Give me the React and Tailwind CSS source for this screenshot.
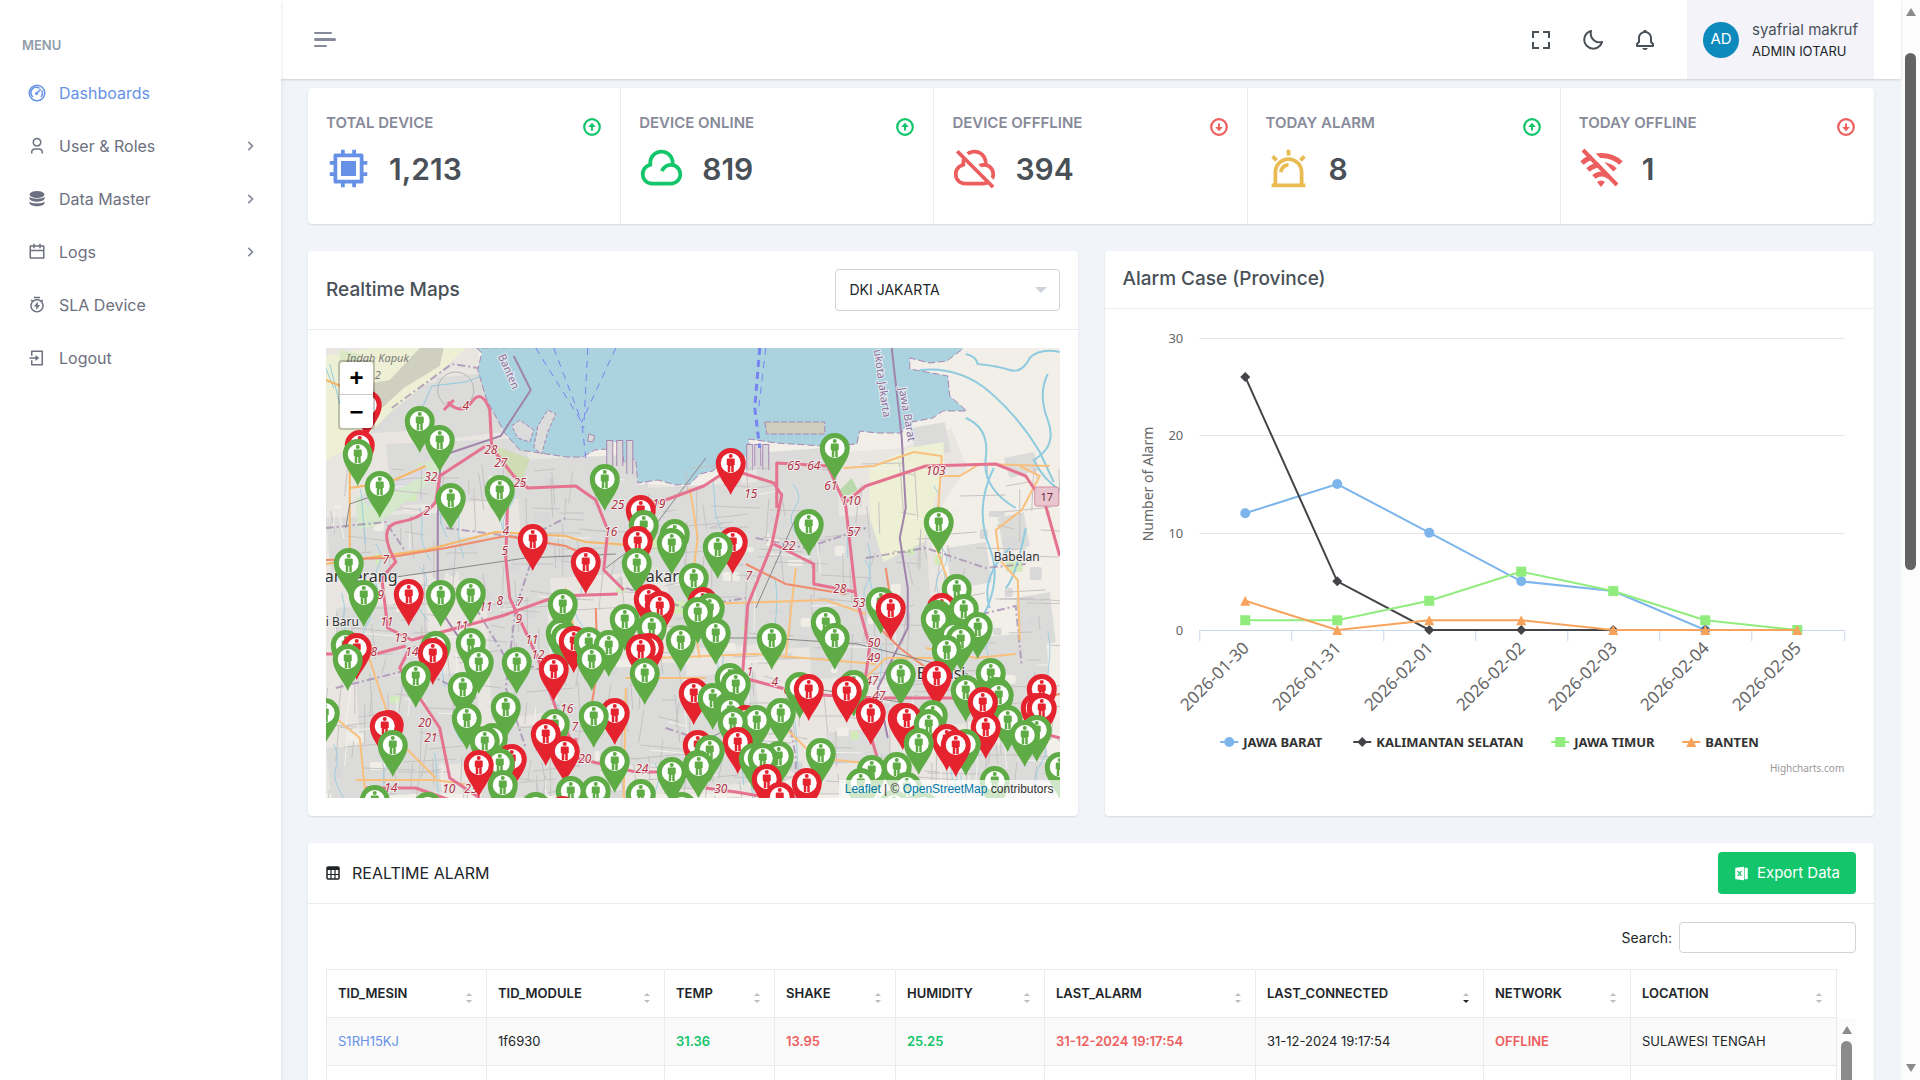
import React from 'react';
import {
  RiAlarmWarningLine,
  RiCalendarLine,
  RiCloudLine,
  RiCloudOffLine,
  RiCpuLine,
  RiFileExcel2Fill,
  RiLoginBoxLine,
  RiTimerFlashLine,
  RiUser3Line,
} from 'react-icons/ri';
import { BiBell, BiChevronRight, BiFullscreen, BiMoon } from 'react-icons/bi';

const GaugeIcon = ({ className }) => (
  <svg viewBox="0 0 18 18" className={className} fill="none" stroke="currentColor">
    <circle cx="9" cy="9" r="7.800" strokeWidth="1.500" />
    <path d="M5 13a5.300 5.300 0 0 1 6.500-8.600M13.600 6.700A5.300 5.300 0 0 1 13 13" strokeWidth="1.500" />
    <path d="M8.500 9.500l4-4" strokeWidth="1.500" strokeLinecap="round" />
    <circle cx="8.500" cy="9.500" r="1.500" fill="currentColor" stroke="none" />
  </svg>
);

const DatabaseIcon = ({ className }) => (
  <svg viewBox="0 0 18 18" className={className} fill="currentColor">
    <ellipse cx="9" cy="4.500" rx="7.500" ry="3.500" />
    <path d="M1.500 6.800c1.500 2.600 13.500 2.600 15 0v1.900c-1 4-14 4-15 0z" />
    <path d="M1.500 11.400c1.500 2.600 13.500 2.600 15 0v1.900c-1 4-14 4-15 0z" />
  </svg>
);

const GridIcon = ({ className }) => (
  <svg viewBox="0 0 14 14" className={className} fill="none" stroke="currentColor">
    <rect x="1" y="1" width="12" height="12" rx="1" strokeWidth="1.500" />
    <path d="M1 2.500h12" strokeWidth="3" />
    <path d="M1 8.500h12M5 3v10M9 3v10" strokeWidth="1.200" />
  </svg>
);

const WifiOffIcon = ({ className }) => (
  <svg viewBox="0 0 45 45" className={className} fill="none">
    <g stroke="currentColor" strokeWidth="5">
      <path d="M3 17a29 29 0 0 1 39 0" />
      <path d="M9 24a20 20 0 0 1 27 0" />
      <path d="M15 31a11 11 0 0 1 15 0" />
    </g>
    <path d="M18 36a6 6 0 0 1 8 0l-4 5z" fill="currentColor" />
    <path d="M8 2l33 34" stroke="#fff" strokeWidth="5" />
    <path d="M4 4l34 35" stroke="currentColor" strokeWidth="4" />
  </svg>
);

const TrendIcon = ({ up }) => (
  <svg viewBox="0 0 18 18" className={`mt-[6px] mr-px size-[18px] ${up ? 'text-[#13c56b]' : 'text-[#ed5e5e]'}`} fill="none">
    <circle cx="9" cy="9" r="7.800" stroke="currentColor" strokeWidth="2.200" />
    <path d={up ? 'M9 4.800l3.800 4.200H10v3.600H8V9H5.200z' : 'M9 13.200L12.800 9H10V5.400H8V9H5.200z'} fill="currentColor" />
  </svg>
);

const menu = [
  { label: 'Dashboards', icon: GaugeIcon, active: true },
  { label: 'User & Roles', icon: RiUser3Line, children: true },
  { label: 'Data Master', icon: DatabaseIcon, children: true },
  { label: 'Logs', icon: RiCalendarLine, children: true },
  { label: 'SLA Device', icon: RiTimerFlashLine },
  { label: 'Logout', icon: RiLoginBoxLine },
];

const stats = [
  { label: 'TOTAL DEVICE', value: '1,213', icon: RiCpuLine, color: 'text-[#6691e7]', up: true },
  { label: 'DEVICE ONLINE', value: '819', icon: RiCloudLine, color: 'text-[#13c56b]', up: true },
  { label: 'DEVICE OFFFLINE', value: '394', icon: RiCloudOffLine, color: 'text-[#ed5e5e]', up: false },
  { label: 'TODAY ALARM', value: '8', icon: RiAlarmWarningLine, color: 'text-[#e8bc52]', up: true },
  { label: 'TODAY OFFLINE', value: '1', icon: WifiOffIcon, color: 'text-[#ed5e5e]', up: false },
];

// [x, y] of each pin head on the 734x450 map
const offlinePins = [
  [41, 57], [34, 97], [207, 191], [315, 162], [312, 193], [260, 214], [405, 115], [407, 194],
  [83, 246], [323, 251], [334, 258], [31, 300], [107, 305], [248, 293], [228, 321], [323, 300],
  [315, 301], [59, 378], [63, 377], [220, 386], [239, 403], [289, 365], [368, 345], [186, 411],
  [153, 417], [372, 397], [237, 463], [377, 254], [565, 260], [616, 260], [611, 328], [657, 354],
  [716, 341], [710, 360], [716, 360], [660, 379], [420, 372], [412, 394], [441, 431], [454, 449],
  [481, 435], [483, 341], [521, 343], [545, 365], [577, 370], [581, 370], [621, 391], [630, 397],
];

const onlinePins = [
  [32, 106], [94, 73], [114, 92], [54, 138], [125, 150], [174, 142], [279, 131], [318, 177],
  [349, 186], [346, 195], [311, 215], [23, 215], [368, 230], [509, 100], [483, 176], [613, 174],
  [392, 199], [38, 247], [115, 247], [145, 245], [237, 256], [299, 271], [326, 279], [20, 297],
  [22, 311], [110, 298], [145, 295], [153, 314], [90, 328], [191, 314], [235, 285], [240, 290],
  [263, 294], [283, 297], [266, 311], [355, 292], [319, 325], [137, 339], [141, 370], [180, 359],
  [67, 397], [-1, 365], [229, 376], [268, 368], [167, 390], [159, 393], [174, 415], [177, 437],
  [289, 413], [245, 443], [270, 443], [315, 446], [346, 424], [372, 417], [49, 452], [102, 459],
  [210, 459], [356, 459], [384, 260], [372, 264], [390, 285], [446, 290], [500, 274], [509, 290],
  [555, 254], [631, 241], [612, 267], [610, 271], [638, 261], [652, 279], [628, 287], [635, 291],
  [621, 302], [575, 326], [665, 325], [640, 342], [671, 344], [673, 347], [682, 372], [711, 382],
  [699, 387], [734, 419], [404, 330], [410, 336], [387, 350], [403, 359], [405, 362], [407, 374],
  [431, 372], [455, 365], [384, 402], [373, 418], [428, 410], [437, 410], [453, 408], [495, 405],
  [474, 339], [528, 337], [607, 367], [603, 376], [593, 395], [640, 396], [546, 422], [571, 419],
  [535, 435], [581, 439], [669, 433], [568, 457], [598, 459], [670, 462],
];

// southern pins are stacked over northern ones
const pins = [
  ...offlinePins.map(([x, y]) => ({ x, y, color: '#e5232f' })),
  ...onlinePins.map(([x, y]) => ({ x, y, color: '#5fac46' })),
].sort((a, b) => a.y - b.y);

const roadNumbers = [
  ['4', 140, 62], ['28', 165, 106], ['27', 175, 119], ['32', 105, 133], ['25', 194, 139],
  ['2', 101, 167], ['4', 180, 187], ['5', 179, 207], ['7', 60, 216], ['25', 292, 161],
  ['19', 333, 160], ['16', 285, 188], ['65', 468, 122], ['64', 488, 122], ['15', 425, 150],
  ['61', 505, 142], ['110', 525, 157], ['57', 528, 188], ['103', 610, 127], ['22', 463, 202],
  ['7', 423, 232], ['9', 55, 251], ['11', 61, 278], ['13', 75, 294], ['14', 86, 308],
  ['8', 174, 257], ['7', 194, 258], ['9', 193, 275], ['11', 206, 296], ['12', 212, 311],
  ['11', 136, 282], ['11', 160, 263], ['28', 514, 245], ['53', 533, 259], ['50', 548, 299],
  ['49', 548, 314], ['47', 546, 337], ['47', 553, 352], ['4', 449, 338], ['6', 461, 346],
  ['20', 99, 379], ['21', 105, 394], ['16', 241, 365], ['7', 249, 383], ['20', 259, 415],
  ['24', 316, 425], ['14', 65, 444], ['10', 123, 445], ['23', 145, 445], ['30', 395, 445],
  ['8', 48, 308], ['1', 424, 328],
];

const blocks = [
  [0, 40, 120, 46], [110, 30, 60, 60], [60, 96, 140, 60], [190, 112, 130, 90], [0, 170, 130, 60],
  [130, 190, 90, 70], [160, 230, 60, 140], [10, 260, 90, 70], [30, 330, 120, 90], [200, 160, 110, 70],
  [320, 140, 120, 90], [430, 105, 80, 120], [340, 210, 120, 90], [440, 220, 100, 80], [500, 170, 70, 110],
  [585, 80, 34, 30], [540, 190, 60, 90], [230, 320, 130, 100], [150, 380, 120, 70], [330, 330, 100, 110],
  [480, 260, 80, 70], [560, 270, 90, 110], [640, 290, 80, 80], [0, 400, 110, 50], [620, 200, 40, 40],
  [672, 170, 26, 34], [690, 250, 34, 50], [500, 385, 60, 30], [640, 400, 80, 40], [678, 110, 30, 18],
];

// small seeded generator, keeps the side streets the same on every render
const seeded = (seed) => () => {
  seed = (seed * 16807) % 2147483647;
  return seed / 2147483647;
};
const random = seeded(77);
const streets = Array.from({ length: 420 }, () => {
  const x = Math.round(random() * 734);
  const y = Math.round(115 + random() * 335);
  const long = Math.round(12 + random() * 42);
  const skew = Math.round(random() * 10 - 5);
  return random() > 0.5 ? `M${x} ${y}l${long} ${skew}` : `M${x} ${y}l${skew} ${long}`;
});
const rivers = Array.from({ length: 46 }, () => {
  const x = Math.round(random() * 734);
  const y = Math.round(130 + random() * 300);
  return `M${x} ${y}q${Math.round(random() * 14)} 12 2 24t${Math.round(random() * 16 - 6)} 30`;
});
const hamlets = Array.from({ length: 130 }, () => ({
  x: Math.round(random() * 734),
  y: Math.round(115 + random() * 335),
  w: Math.round(4 + random() * 14),
  h: Math.round(4 + random() * 10),
}));

const series = [
  { name: 'JAWA BARAT', color: '#7cb5ec', shape: 'circle', data: [12, 15, 10, 5, 4, 0, 0], legendX: 97 },
  { name: 'KALIMANTAN SELATAN', color: '#434348', shape: 'diamond', data: [26, 5, 0, 0, 0, 0, 0], legendX: 230 },
  { name: 'JAWA TIMUR', color: '#90ed7d', shape: 'square', data: [1, 1, 3, 6, 4, 1, 0], legendX: 428 },
  { name: 'BANTEN', color: '#f7a35c', shape: 'triangle', data: [3, 0, 1, 1, 0, 0, 0], legendX: 559 },
];

const dates = ['2026-01-30', '2026-01-31', '2026-02-01', '2026-02-02', '2026-02-03', '2026-02-04', '2026-02-05'];

const columns = [
  { label: 'TID_MESIN', width: 'w-[160px]' },
  { label: 'TID_MODULE', width: 'w-[178px]' },
  { label: 'TEMP', width: 'w-[110px]' },
  { label: 'SHAKE', width: 'w-[121px]' },
  { label: 'HUMIDITY', width: 'w-[149px]' },
  { label: 'LAST_ALARM', width: 'w-[211px]' },
  { label: 'LAST_CONNECTED', width: 'w-[228px]', sorted: true },
  { label: 'NETWORK', width: 'w-[147px]' },
  { label: 'LOCATION', width: 'w-[206px]' },
];

const Sidebar = () => (
  <aside className="z-20 w-[281px] shrink-0 bg-white pt-9 shadow-[0_2px_4px_rgba(15,34,58,0.12)]">
    <p className="px-[22px] text-[13px] leading-[18px] font-semibold text-[#919da9]">MENU</p>
    <nav className="mt-3">
      {menu.map(({ label, icon: Icon, active, children }) => (
        <a
          key={label}
          href="#"
          className={`flex h-[53px] items-center gap-[13px] pr-[21px] pl-7 text-base ${active ? 'text-[#6691e7]' : 'text-[#6d7080]'}`}
        >
          <Icon className="size-[18px]" />
          <span className="flex-1">{label}</span>
          {children && <BiChevronRight className="size-5 text-[#878a99]" />}
        </a>
      ))}
    </nav>
  </aside>
);

const Header = () => (
  <header className="z-10 flex h-[79px] shrink-0 items-center justify-between bg-white pr-[27px] pl-[33px] shadow-[0_1px_2px_rgba(56,65,74,0.2)]">
    <button aria-label="Toggle menu" className="flex flex-col gap-1">
      <span className="h-[2px] w-[18px] rounded bg-[#878a99]"></span>
      <span className="h-[3px] w-[22px] rounded bg-[#878a99]"></span>
      <span className="h-[2px] w-[13px] rounded bg-[#878a99]"></span>
    </button>
    <div className="flex h-full items-center text-[#495057]">
      <div className="flex gap-7 pr-[30px]">
        <button aria-label="Fullscreen"><BiFullscreen className="size-6" /></button>
        <button aria-label="Dark mode"><BiMoon className="size-6" /></button>
        <button aria-label="Notifications"><BiBell className="size-6" /></button>
      </div>
      <button className="flex h-full items-center gap-[13px] bg-[#f3f3f9] px-4 text-left">
        <span className="flex size-9 items-center justify-center rounded-full bg-[#0d8abc] text-[15px] text-white">AD</span>
        <span>
          <span className="block text-[15px] leading-[22px] text-[#495057]">syafrial makruf</span>
          <span className="block text-[13px] leading-[20px] text-[#212529]">ADMIN IOTARU</span>
        </span>
      </button>
    </div>
  </header>
);

const StatCards = () => (
  <section className="grid grid-cols-5 divide-x divide-[#e9ebec] rounded bg-white shadow-[0_1px_2px_rgba(56,65,74,0.15)]">
    {stats.map(({ label, value, icon: Icon, color, up }) => (
      <div key={label} className="h-[136px] px-[18px] pt-6">
        <div className="flex h-[26px] justify-between">
          <h5 className="text-[15px] leading-[22px] font-semibold text-[#878a99]">{label}</h5>
          <TrendIcon up={up} />
        </div>
        <div className="mt-2 flex items-center gap-[18px]">
          <Icon className={`size-[45px] ${color}`} />
          <h2 className="text-[30px] leading-9 font-semibold text-[#495057]">{value}</h2>
        </div>
      </div>
    ))}
  </section>
);

const Pin = ({ x, y, color }) => (
  <g transform={`translate(${x} ${y})`}>
    <path d="M0 32C-4 22-15 12-15 0a15 15 0 0 1 30 0C15 12 4 22 0 32z" fill={color} />
    <circle r="10" fill="#fff" />
    <circle cy="-7" r="2" fill={color} />
    <path d="M-3-4.500h6q1 0 1 1V2H3V9H.500V3h-1V9H-3V2h-1v-5.500q0-1 1-1z" fill={color} />
  </g>
);

const JakartaMap = () => (
  <svg viewBox="0 0 734 450" preserveAspectRatio="xMidYMid slice" className="block h-full w-full bg-[#f2efe9]">
    <path d="M0 0h152l9 52 33 50 63 8 57 25 60 5 50-27 107-10 45-3 50-20 15 40-40 60 40 120 60 80v66H0z" fill="#e9e6e2" />
    {blocks.map(([x, y, w, h]) => (
      <path key={`${x}-${y}`} d={`M${x} ${y}l${w} -6l6 ${h}l-${w} 8z`} fill="#dbdbda" />
    ))}
    {hamlets.map(({ x, y, w, h }, i) => (
      <rect key={i} x={x} y={y} width={w} height={h} rx="2" fill={i % 7 === 0 ? '#d3ebbb' : i % 2 === 0 ? '#f0ede7' : '#d9d8d8'} />
    ))}
    {/* Fields and marsh */}
    <path d="M0 8l44-8 96 0-30 28-45 36-30 30-35 18z" fill="#eef0d5" />
    <path d="M40 36l24-4 30-32h24l-4 18-36 22-24 22z" fill="#cfd0bf" />
    <path d="M14 2l20 4-4 30-16-8z" fill="#dbe8c4" />
    <path d="M30 150l80-40 6 14-66 54-18 4z" fill="#d5e8cb" />
    <path d="M36 148l62-32 6 8-62 34z" fill="#dadae0" />
    <path d="M166 96l24 10 14 4-8 24-14-8z" fill="#cfdcb4" />
    <path d="M544 120l40-20 34-6 0 26-20 74-40 20-14-44z" fill="#eef0d5" />
    <path d="M514 142l12-12 6 12-14 8z" fill="#b9d9ab" />
    {/* Java sea */}
    <path
      d="M151 0l5 5-4 17 9 30 18 33 15 17 47 7 16 0 12-7 13-1 2-7 12 0 2 20 12-3 2 24 20-3 18 5 14-1 10-10 13-3 10-9 27-6-1-17 28 4 46 3 34-2 3-13 17 2 25 0 5-10 26-5 10-7 24 0-17-15-2-20-38-7 0-11 20 5 17-2 16-12 2-5z"
      fill="#aad3df" stroke="#a787b0" strokeWidth="1" strokeDasharray="7 3"
    />
    <path d="M208 100l4-22 10-16 8 4-8 18-6 22z" fill="#dcdcdc" stroke="#a787b0" strokeDasharray="4 2" />
    <path d="M186 78l8-6 14 10-4 12-12-4z" fill="#dcdcdc" stroke="#a787b0" strokeDasharray="4 2" />
    <path d="M439 74h60v12h-58z" fill="#cfcdbd" stroke="#a787b0" strokeDasharray="6 2" />
    <path d="M263 86l6 2-2 6-5-1z" fill="#dcdcdc" stroke="#a787b0" />
    <path d="M284 92v26m10-26v26m10-26v34M424 96v26m8-26v22m8-22v26" stroke="#a787b0" strokeWidth="7" fill="none" />
    <path d="M284 93v26m10-26v26m10-26v34M424 97v26m8-26v22m8-22v26" stroke="#d9d7da" strokeWidth="5" fill="none" />
    {/* Side streets and rivers */}
    <path d={streets.join('')} stroke="#c6c3c3" strokeWidth="1" fill="none" />
    <path d={streets.slice(0, 60).map((s) => s.replace('l', 'm9 5l')).join('')} stroke="#f4f2f0" strokeWidth="1" fill="none" />
    <path d={rivers.join('')} stroke="#9fcfe0" strokeWidth="1" fill="none" />
    <path d="M640 6q10 2 12 10q20 2 32 6t20-12q10-10 30-6M594 22q40-4 70 22t50 60l14 30M640 70q24 10 20 40t30 50M668 120q-20 40-4 80t-20 90M722 26q-10 20 0 46t-14 40q10 20 26 30M700 180q-10 50-20 60M684 200q-30 30-20 60" stroke="#8fcbdf" strokeWidth="2" fill="none" />
    <path d="M94 66l12-28 34-4 16-6M4 16l10 40M0 20l8 20" stroke="#8fcbdf" strokeWidth="1" fill="none" />
    {/* Province borders */}
    <path d="M188 8l17 34-30 46-60 20-3 60 0 90 20 30M566 0l10 90 4 70-6 30 8 50 0 40-30 60 10 50" stroke="#a084ac" strokeWidth="2" fill="none" />
    <path d="M66 60l60-44 26 4M0 180l60-6 20 30M120 180l80 10 40-20M430 190l50 10 60-20M540 210l60-10 60 20 40-4M10 340l80-20 60 30M210 200l-20 60-10 80 20 60M300 240l60 20 60-10M340 380l60 20 40 50M460 350l10 60 0 40M640 270l50-12 6 60M150 260l30 50 60 20" stroke="#a084ac" strokeWidth="2" strokeDasharray="8 3 2 3" opacity="0.7" fill="none" />
    {/* Secondary roads */}
    <path d="M0 32l20 8M0 216l40-6 60-8 70-18 70 4 20 6 60 4M24 90l0 130M24 140l40-6 36-16" stroke="#f6b867" strokeWidth="2" fill="none" />
    <path d="M364 140l8 50-8 60 10 60M518 120l30-2 40-14 28 4-2 30-4 60 14 40M614 128l20 0 20-12 70 2M694 118l20 10-18 34-26 20 4 30 18 20 2 60M380 256l120-4 40 14M330 310l100-4 120 10M300 330l80 0M470 220l-10 90M10 370l24 20 6 60M40 300l20 60 20 40 30 30M30 432h80l40 6M300 340l-2 110M240 240l10 50 60 8M540 330l20-20 80 0M460 380l30 30 60 6M600 300l50 10 40-4" stroke="#f8c07c" strokeWidth="2" fill="none" />
    <path d="M0 212l60-2 60-10 60-12 60 10 30 14M560 220l6 40-12 20 20 20 40 30M420 216l40 20 60 10M716 350l18-4M270 260l2 60-10 60" stroke="#f08b6c" strokeWidth="2" fill="none" />
    {/* Railways */}
    <path d="M20 180l4-24 40-14M50 232l150-22 90-4M372 290h70l90 6 80 20 30 10M364 400l120-60 90 14M380 110l-60 80-40 30M470 170l-40 90" stroke="#888" strokeWidth="1" fill="none" />
    <circle cx="130" cy="42" r="18" stroke="#b5b5b5" fill="none" />
    {/* Motorways */}
    <path
      d="M118 62l10-10M122 54q14 14 24 0t18 8l2 38 22 28 14 12 48-2 20 14 12 30-4 40 20 20M160 98l-46 30-4 26q-12 16-36 20t-4 40l-14 16 6 50 24 12 90-24 56-20 60-2M182 150l-2 60 4 40 28 60 18 50 14 30M84 300l-10 20 40 60 10 50 30 20M318 160l60-22 26-17 44 14 8 12-10 50-24 60-6 80M451 160v-45l51 3 18 40 10 90 14 50-8 60 18 60M520 154l20-16 60-20 70-2 30 12 20 30 14 50M418 330l60 16 70 4 90 0 60 30 36 10M448 196l40 20 0 20 42 8M250 390l0 20 60 14 40 0M0 306l50 0 30-8M40 440l50 0 40 14M380 440l30 4 60 10"
      stroke="#e5738f" strokeWidth="3" strokeLinejoin="round" fill="none"
    />
    {/* Ferry lines */}
    <path d="M210 0l46 74 4 36M228 0l28 74M262 0l-4 80M290 0l-34 74M440 0l-7 60" stroke="#7883f2" strokeWidth="1" strokeDasharray="7 6" fill="none" />
    <path d="M434 0l-5 60 5 40" stroke="#7883f2" strokeWidth="3" strokeDasharray="7 5" fill="none" />
    {/* Labels */}
    <g fontFamily='"Noto Sans", sans-serif' fontSize="11" fontStyle="italic" fill="#777" textAnchor="middle">
      <text x="52" y="14">Indah Kapuk</text>
      <text x="52" y="31">2</text>
    </g>
    <g fontFamily='"Noto Sans", sans-serif' fontSize="11" fill="#8d6c9b" stroke="#e4ecef" strokeWidth="2" paintOrder="stroke">
      <text transform="translate(172 8) rotate(66)">Banten</text>
      <text transform="translate(548 2) rotate(82)">ukota Jakarta</text>
      <text transform="translate(573 40) rotate(80)">Jawa Barat</text>
    </g>
    <g fontFamily='"Noto Sans", sans-serif' fontSize="12" fontStyle="italic" fill="#b2303f" stroke="#eee" strokeWidth="2" paintOrder="stroke" textAnchor="middle">
      {roadNumbers.map(([text, x, y]) => (
        <text key={`${x}-${y}`} x={x} y={y}>{text}</text>
      ))}
    </g>
    <rect x="709" y="139" width="24" height="19" rx="2" fill="#e9c6cf" stroke="#d08fa0" />
    <text x="721" y="153" fontFamily='"Noto Sans", sans-serif' fontSize="11" fill="#70303f" textAnchor="middle">17</text>
    <g fontFamily='"Noto Sans", sans-serif' fill="#333" stroke="#eee" strokeWidth="2" paintOrder="stroke">
      <text x="668" y="213" fontSize="12">Babelan</text>
      <text x="-1" y="234" fontSize="16">angerang</text>
      <text x="320" y="234" fontSize="16">akarta</text>
      <text x="591" y="331" fontSize="16">Bekasi</text>
      <text x="0" y="278" fontSize="12">i Baru</text>
    </g>
    {pins.map((pin, i) => (
      <Pin key={i} {...pin} />
    ))}
  </svg>
);

const MapCard = () => (
  <section className="rounded bg-white shadow-[0_1px_2px_rgba(56,65,74,0.15)]">
    <div className="flex h-[79px] items-center justify-between border-b border-[#e9ebec] px-[18px]">
      <h4 className="text-[19px] font-medium text-[#495057]">Realtime Maps</h4>
      <div className="relative w-[225px]">
        <select aria-label="Province" className="h-[42px] w-full appearance-none rounded border border-[#ced4da] bg-white px-[14px] text-sm text-[#212529]">
          <option>DKI JAKARTA</option>
        </select>
        <svg viewBox="0 0 12 6" className="pointer-events-none absolute top-[18px] right-[13px] h-[6px] w-3">
          <path d="M0 0h12L6 6z" fill="#ced4da" />
        </svg>
      </div>
    </div>
    <div className="p-[18px]">
      <div className="relative h-[450px] overflow-hidden">
        <JakartaMap />
        <div className="absolute top-3 left-3 flex flex-col rounded border-2 border-black/20 bg-clip-padding font-['Liberation_Sans',sans-serif] text-2xl leading-none font-bold text-black">
          <button aria-label="Zoom in" className="flex h-[33px] w-[33px] items-center justify-center rounded-t-sm border-b border-[#ccc] bg-white">+</button>
          <button aria-label="Zoom out" className="flex h-[33px] w-[33px] items-center justify-center rounded-b-sm bg-white">−</button>
        </div>
        <p className="absolute right-0 bottom-0 bg-white/70 px-[6px] font-['Liberation_Sans',sans-serif] text-xs leading-[18px] text-[#333]">
          <a href="#" className="text-[#0078a8]">Leaflet</a> | © <a href="#" className="text-[#0078a8]">OpenStreetMap</a> contributors
        </p>
      </div>
    </div>
  </section>
);

const Marker = ({ shape, x, y, color }) => {
  if (shape === 'circle') return <circle cx={x} cy={y} r="5" fill={color} />;
  if (shape === 'diamond') return <path d={`M${x} ${y - 5}l5 5-5 5-5-5z`} fill={color} />;
  if (shape === 'square') return <rect x={x - 5} y={y - 5} width="10" height="10" fill={color} />;
  return <path d={`M${x} ${y - 5}l5 10h-10z`} fill={color} />;
};

const AlarmChart = () => {
  const px = (i) => 122 + i * 92;
  const py = (v) => 303 - (v * 292) / 30;

  return (
    <svg viewBox="0 0 733 450" className="block h-[450px] w-full font-['Noto_Sans',sans-serif]">
      {[30, 20, 10, 0].map((v) => (
        <g key={v}>
          <path d={`M76 ${Math.round(py(v)) + 0.5}H721`} stroke={v ? '#e6e6e6' : '#ccd6eb'} />
          <text x="60" y={py(v) + 5} textAnchor="end" fontSize="13" fill="#666">{v}</text>
        </g>
      ))}
      {[76, 168, 260, 352, 444, 536, 628, 721].map((x) => (
        <path key={x} d={`M${x + 0.5} 303v11`} stroke="#ccd6eb" />
      ))}
      {dates.map((date, i) => (
        <text key={date} transform={`translate(${px(i) + 5} 322) rotate(-45)`} textAnchor="end" fontSize="17" fill="#666">{date}</text>
      ))}
      <text transform="translate(30 157) rotate(-90)" textAnchor="middle" fontSize="14" fill="#666">Number of Alarm</text>
      {series.map(({ name, color, shape, data, legendX }) => (
        <g key={name}>
          <polyline points={data.map((v, i) => `${px(i)},${py(v)}`).join(' ')} fill="none" stroke={color} strokeWidth="2" />
          {data.map((v, i) => (
            <Marker key={i} shape={shape} x={px(i)} y={py(v)} color={color} />
          ))}
          <path d={`M${legendX} 415h18`} stroke={color} strokeWidth="2" />
          <Marker shape={shape} x={legendX + 9} y={415} color={color} />
          <text x={legendX + 23} y="420" fontSize="13" fontWeight="bold" fill="#333">{name}</text>
        </g>
      ))}
      <text x="721" y="445" textAnchor="end" fontSize="10" fill="#999">Highcharts.com</text>
    </svg>
  );
};

const ChartCard = () => (
  <section className="rounded bg-white shadow-[0_1px_2px_rgba(56,65,74,0.15)]">
    <div className="flex h-[58px] items-center border-b border-[#e9ebec] px-[18px]">
      <h4 className="text-[19px] font-medium text-[#495057]">Alarm Case (Province)</h4>
    </div>
    <div className="p-[18px]">
      <AlarmChart />
    </div>
  </section>
);

const SortIcon = ({ sorted }) => (
  <svg viewBox="0 0 6 10" className="mt-2 mr-[3px] h-[10px] w-[6px]">
    <path d="M0 3h6L3 0z" fill="#bcbec0" />
    <path d="M0 7h6l-3 3z" fill={sorted ? '#212529' : '#bcbec0'} />
  </svg>
);

const AlarmTable = () => (
  <section className="rounded bg-white shadow-[0_1px_2px_rgba(56,65,74,0.15)]">
    <div className="flex h-[61px] items-center justify-between border-b border-[#e9ebec] px-[18px]">
      <h5 className="flex items-center gap-3 text-base text-[#212529]">
        <GridIcon className="size-[14px]" />
        REALTIME ALARM
      </h5>
      <button className="flex h-[42px] items-center gap-2 rounded bg-[#13c56b] px-4 text-[15px] text-white">
        <RiFileExcel2Fill className="size-[15px]" />
        Export Data
      </button>
    </div>
    <div className="px-[18px] pt-[18px]">
      <div className="flex items-center justify-end gap-[7px]">
        <label htmlFor="search" className="text-sm text-[#212529]">Search:</label>
        <input id="search" type="search" className="h-[31px] w-[177px] rounded border border-[#ced4da] px-2 text-sm" />
      </div>
      <div className="mt-4 flex">
        <table className="w-full flex-1 table-fixed border-collapse text-left text-[13px] text-[#212529]">
          <thead>
            <tr className="h-12">
              {columns.map(({ label, width, sorted }) => (
                <th key={label} className={`border border-[#e9ebec] px-[11px] font-semibold ${width}`}>
                  <span className="flex items-center justify-between">
                    {label}
                    <SortIcon sorted={sorted} />
                  </span>
                </th>
              ))}
            </tr>
          </thead>
          <tbody className="[&_td]:border [&_td]:border-[#e9ebec] [&_td]:px-[11px]">
            <tr className="h-12 bg-[#fafafa]">
              <td><a href="#" className="text-[#6691e7]">S1RH15KJ</a></td>
              <td>1f6930</td>
              <td className="font-semibold text-[#13c56b]">31.36</td>
              <td className="font-semibold text-[#ed5e5e]">13.95</td>
              <td className="font-semibold text-[#13c56b]">25.25</td>
              <td className="font-semibold text-[#ed5e5e]">31-12-2024 19:17:54</td>
              <td>31-12-2024 19:17:54</td>
              <td className="font-semibold text-[#ed5e5e]">OFFLINE</td>
              <td>SULAWESI TENGAH</td>
            </tr>
            <tr className="h-12">
              {columns.map(({ label }) => (
                <td key={label}></td>
              ))}
            </tr>
          </tbody>
        </table>
        <div className="mt-[49px] flex w-5 flex-col items-center bg-[#fcfcfc] pt-2">
          <svg viewBox="0 0 10 8" className="h-2 w-[10px]"><path d="M5 0l5 8H0z" fill="#8b8b8b" /></svg>
          <div className="mt-[7px] w-[11px] flex-1 rounded-t-full bg-[#8b8b8b]"></div>
        </div>
      </div>
    </div>
  </section>
);

const PageScrollbar = () => (
  <div className="flex w-[19px] shrink-0 flex-col items-center bg-[#fcfcfc] pt-2 pb-2">
    <svg viewBox="0 0 10 8" className="h-2 w-[10px]"><path d="M5 0l5 8H0z" fill="#8b8b8b" /></svg>
    <div className="mt-[37px] h-[517px] w-[11px] rounded-full bg-[#636363]"></div>
    <svg viewBox="0 0 10 8" className="mt-auto h-2 w-[10px]"><path d="M0 0h10L5 8z" fill="#8b8b8b" /></svg>
  </div>
);

const App = () => (
  <div className="flex h-screen overflow-hidden bg-[#f1f5f9] font-['Inter',sans-serif]">
    <Sidebar />
    <div className="flex min-w-0 flex-1 flex-col">
      <Header />
      <main className="flex min-h-0 flex-1 flex-col gap-[27px] overflow-hidden px-[27px] pt-[9px] *:shrink-0">
        <StatCards />
        <div className="grid grid-cols-2 gap-[27px]">
          <MapCard />
          <ChartCard />
        </div>
        <AlarmTable />
      </main>
    </div>
    <PageScrollbar />
  </div>
);

export default App;
